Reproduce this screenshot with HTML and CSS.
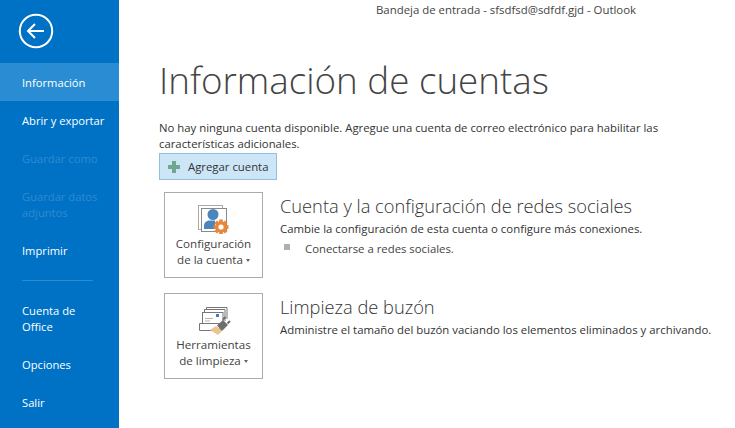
FILE: index.html
```html
<!DOCTYPE html>
<html lang="es">
<head>
<meta charset="utf-8">
<title>Outlook</title>
<link rel="stylesheet" href="styles.css">
</head>
<body>
<div class="app">
  <nav class="side">
    <div class="back">
      <svg width="36" height="36" viewBox="0 0 36 36" fill="none" stroke="#fff"><circle cx="18" cy="18" r="16.2" stroke-width="2"/><path d="M10 18H26M17 11L10 18L17 25" stroke-width="2"/></svg>
    </div>
    <a class="item active">Información</a>
    <a class="item">Abrir y exportar</a>
    <a class="item off">Guardar como</a>
    <a class="item off">Guardar datos<br>adjuntos</a>
    <a class="item">Imprimir</a>
    <div class="sep"></div>
    <a class="item">Cuenta de<br>Office</a>
    <a class="item">Opciones</a>
    <a class="item">Salir</a>
  </nav>
  <main class="main">
    <div class="wintitle">Bandeja de entrada - sfsdfsd@sdfdf.gjd - Outlook</div>
    <h1 class="title">Información de cuentas</h1>
    <p class="note">No hay ninguna cuenta disponible. Agregue una cuenta de correo electrónico para habilitar las características adicionales.</p>
    <button class="add">
      <svg width="12" height="12" viewBox="0 0 12 12"><path d="M4 0H8V4H12V8H8V12H4V8H0V4H4Z" fill="#6fa88f"/></svg>
      <span>Agregar cuenta</span>
    </button>
    <section class="group first">
      <div class="tile">
        <svg class="ico" width="37" height="30" viewBox="0 0 37 30">
          <rect x="3.5" y="1.5" width="24" height="24" fill="#fff" stroke="#a9a9a9"/>
          <rect x="6.5" y="4.5" width="25" height="23" fill="#fff" stroke="#8a8a8a"/>
          <circle cx="18" cy="10.5" r="5.5" fill="#4a86bd"/>
          <path d="M9 25V22C9 18 12 16.5 15 16.5H20V25Z" fill="#4a86bd"/>
          <g fill="#e8873a"><circle cx="26" cy="23" r="5.8"/><rect x="24.2" y="15.5" width="3.6" height="15"/><rect x="18.5" y="21.2" width="15" height="3.6"/><rect x="24.2" y="15.5" width="3.6" height="15" transform="rotate(45 26 23)"/><rect x="24.2" y="15.5" width="3.6" height="15" transform="rotate(-45 26 23)"/></g>
          <circle cx="26" cy="23" r="2.6" fill="#fff"/>
        </svg>
        <span class="tlabel">Configuración<br>de la cuenta<i class="caret"></i></span>
      </div>
      <div class="info">
        <h2>Cuenta y la configuración de redes sociales</h2>
        <p>Cambie la configuración de esta cuenta o configure más conexiones.</p>
        <div class="bullet"><i></i><span>Conectarse a redes sociales.</span></div>
      </div>
    </section>
    <section class="group">
      <div class="tile">
        <svg class="ico" width="37" height="30" viewBox="0 0 37 30">
          <path d="M11.5 5V2.5H32V14M9.5 7V4.5H30V16" fill="none" stroke="#777"/>
          <rect x="7.5" y="7.5" width="20.5" height="12" fill="#fff" stroke="#777"/>
          <rect x="21" y="9" width="3" height="3" fill="#3c7fc0"/>
          <path d="M10 13.5H18M10 16H15" stroke="#b5b5b5"/>
          <path d="M4.5 18.5H25V25.5H4.5Z" fill="#fff" stroke="#777"/>
          <path d="M21 21L27 26L23 30L15 25Z" fill="#e8c58a"/>
          <path d="M22 20.5L28 15L33 20L27 26Z" fill="#6e6e6e"/>
          <path d="M28 14.5L30.5 12M32.5 18.5L35 16" stroke="#6e6e6e" stroke-width="2"/>
        </svg>
        <span class="tlabel">Herramientas<br>de limpieza<i class="caret"></i></span>
      </div>
      <div class="info">
        <h2>Limpieza de buzón</h2>
        <p>Administre el tamaño del buzón vaciando los elementos eliminados y archivando.</p>
      </div>
    </section>
  </main>
</div>
</body>
</html>
```
FILE: styles.css
```css
html, body { margin: 0; padding: 0; height: 100%; background: #fff; }
body { font-family: "Open Sans", "Noto Sans", sans-serif; font-size: 11.35px; color: #444; overflow: hidden; }
.app { display: flex; height: 428px; }
.side { width: 119px; flex: none; background: #0072c6; color: #fff; }
.back { height: 63px; padding: 13px 0 0 18px; box-sizing: border-box; }
.back svg { display: block; }
.item { display: block; padding: 12px 0 10px 22px; line-height: 16px; font-size: 11.2px; white-space: nowrap; }
.item.active { background: #2a8dd4; }
.item.off { color: #2f8ad0; }
.sep { height: 1px; margin: 11px 26px 10px 22px; background: #2a8dd4; }
.main { flex: 1; padding-left: 40px; min-width: 0; }
.wintitle { height: 20px; line-height: 20px; margin-left: 217px; white-space: nowrap; font-size: 11.4px; color: #444; }
.title { margin: 35px 0 0; font-weight: 300; font-size: 36.75px; line-height: 50px; color: #444; white-space: nowrap; }
.note { margin: 15px 0 1px; width: 560px; line-height: 16px; color: #333; }
.add { display: flex; align-items: center; gap: 8px; width: 118px; height: 27px; margin: 0; padding: 0 0 0 8px; box-sizing: border-box; background: #cde6f7; border: 1px solid #92c0e0; font: inherit; color: #333; }
.group { display: flex; margin: 15px 0 0 5px; }
.group.first { margin-top: 12px; }
.tile { width: 99px; height: 86px; flex: none; box-sizing: border-box; border: 1px solid #ababab; display: flex; flex-direction: column; align-items: center; padding-top: 11px; }
.ico { display: block; }
.tlabel { margin-top: 2px; text-align: center; line-height: 16px; font-size: 11.6px; color: #444; white-space: nowrap; }
.caret { display: inline-block; margin-left: 3px; vertical-align: 2px; border: 2.5px solid transparent; border-top: 3px solid #666; border-bottom: 0; }
.info { margin-left: 17px; }
.info h2 { margin: 1px 0 0; font-weight: 300; font-size: 18.26px; line-height: 26px; color: #333; white-space: nowrap; }
.info p { margin: 2px 0 0; line-height: 16px; font-size: 11.38px; color: #333; white-space: nowrap; }
.bullet { display: flex; align-items: center; line-height: 16px; margin-top: 4px; color: #444; }
.bullet i { width: 6px; height: 6px; background: #b0b0b0; margin: 0 15px 4px 4px; }
```
